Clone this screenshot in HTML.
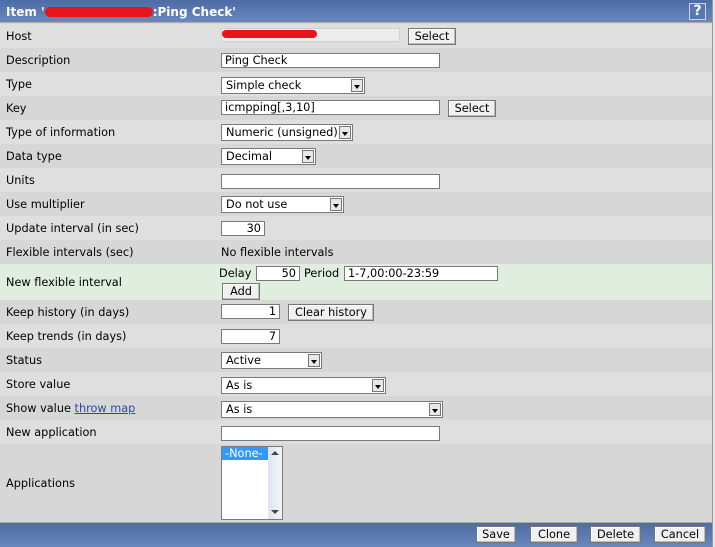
<!DOCTYPE html>
<html><head><meta charset="utf-8"><style>
*{box-sizing:border-box;margin:0;padding:0}
body{width:715px;height:547px;background:#d8d8d8;font-family:"DejaVu Sans","Liberation Sans",sans-serif;font-size:11.3px;color:#000;position:relative;overflow:hidden}
.a{position:absolute}
.row{position:absolute;left:0;width:712px}
.l{background:#dfdfdf}.d{background:#d7d7d7}
.lab{position:absolute;left:6px;font-size:11.3px}
.in{position:absolute;background:#fff;border:1px solid #7a7a7a;height:15px;padding:0 3px;line-height:14px;font-size:11.3px;white-space:nowrap;overflow:hidden}
.r{text-align:right}
.sel{position:absolute;background:#fff;border:1px solid #7a7a7a;height:17px;padding:0 4px;line-height:16px;font-size:11.3px}
.sel:after{content:"";position:absolute;right:1px;top:1px;width:12px;height:13px;background:#e8e8e8;border:1px solid #777;box-sizing:border-box}
.sel:before{content:"";position:absolute;right:4px;top:7px;border:3px solid transparent;border-top:4px solid #000;z-index:2}
.btn{position:absolute;background:#f0f0f0;border:1px solid #777;box-shadow:inset -1px -1px 0 #bbb,inset 1px 1px 0 #fff;height:17px;text-align:center;line-height:16px;font-size:11.3px}
.hdr{position:absolute;left:0;width:712px;background:linear-gradient(#4c6ca6,#6a88bc);color:#fff}
</style></head><body>
<div class="hdr" style="top:0;height:23px;border-bottom:1px solid #aaa"></div>
<div class="a" style="left:6px;top:5px;color:#fff;font-weight:bold;font-size:12px">Item '<span style="display:inline-block;width:108px;height:10px;background:#e8141c;border-radius:5px;vertical-align:-1px"></span>:Ping Check'</div>
<div class="a" style="left:689px;top:3px;width:17px;height:17px;border:1px solid #c8d4e8;color:#fff;font-weight:bold;font-size:14px;line-height:15px;text-align:center;background:#5a78b0">?</div>

<div class="row l" style="top:24px;height:24px"></div>
<div class="row d" style="top:48px;height:24px"></div>
<div class="row l" style="top:72px;height:24px"></div>
<div class="row d" style="top:96px;height:24px"></div>
<div class="row l" style="top:120px;height:24px"></div>
<div class="row d" style="top:144px;height:24px"></div>
<div class="row l" style="top:168px;height:24px"></div>
<div class="row d" style="top:192px;height:24px"></div>
<div class="row l" style="top:216px;height:24px"></div>
<div class="row d" style="top:240px;height:24px"></div>
<div class="row" style="top:264px;height:36px;background:#dfeedf"></div>
<div class="row d" style="top:300px;height:24px"></div>
<div class="row l" style="top:324px;height:24px"></div>
<div class="row d" style="top:348px;height:24px"></div>
<div class="row l" style="top:372px;height:24px"></div>
<div class="row d" style="top:396px;height:24px"></div>
<div class="row l" style="top:420px;height:24px"></div>
<div class="row d" style="top:444px;height:78px"></div>
<div class="a" style="left:712px;top:0;width:3px;height:547px;background:#e4e4e4;border-left:1px solid #9a9a9a"></div>

<div class="lab" style="top:30px">Host</div>
<div class="lab" style="top:54px">Description</div>
<div class="lab" style="top:78px">Type</div>
<div class="lab" style="top:102px">Key</div>
<div class="lab" style="top:126px">Type of information</div>
<div class="lab" style="top:150px">Data type</div>
<div class="lab" style="top:174px">Units</div>
<div class="lab" style="top:198px">Use multiplier</div>
<div class="lab" style="top:222px">Update interval (in sec)</div>
<div class="lab" style="top:246px">Flexible intervals (sec)</div>
<div class="lab" style="top:276px">New flexible interval</div>
<div class="lab" style="top:306px">Keep history (in days)</div>
<div class="lab" style="top:330px">Keep trends (in days)</div>
<div class="lab" style="top:354px">Status</div>
<div class="lab" style="top:378px">Store value</div>
<div class="lab" style="top:402px">Show value <span style="color:#1f4f9f;text-decoration:underline">throw map</span></div>
<div class="lab" style="top:426px">New application</div>
<div class="lab" style="top:477px">Applications</div>

<div class="a" style="left:221px;top:28px;width:179px;height:14px;background:#ececec;border:1px solid #d0d0d0"></div>
<div class="a" style="left:222px;top:30px;width:95px;height:8px;background:#e8141c;border-radius:4px"></div>
<div class="btn" style="left:408px;top:28px;width:48px">Select</div>
<div class="in" style="left:221px;top:53px;width:219px">Ping Check</div>
<div class="sel" style="left:221px;top:77px;width:144px">Simple check</div>
<div class="in" style="left:221px;top:100px;width:219px">icmpping[,3,10]</div>
<div class="btn" style="left:448px;top:100px;width:48px">Select</div>
<div class="sel" style="left:221px;top:124px;width:132px">Numeric (unsigned)</div>
<div class="sel" style="left:221px;top:148px;width:95px">Decimal</div>
<div class="in" style="left:221px;top:174px;width:219px"></div>
<div class="sel" style="left:221px;top:196px;width:123px">Do not use</div>
<div class="in r" style="left:221px;top:221px;width:44px">30</div>
<div class="a" style="left:221px;top:246px">No flexible intervals</div>
<div class="a" style="left:219px;top:267px">Delay</div>
<div class="in r" style="left:256px;top:266px;width:44px">50</div>
<div class="a" style="left:304px;top:267px">Period</div>
<div class="in" style="left:344px;top:266px;width:154px">1-7,00:00-23:59</div>
<div class="btn" style="left:222px;top:283px;width:38px">Add</div>
<div class="in r" style="left:221px;top:304px;width:59px">1</div>
<div class="btn" style="left:288px;top:304px;width:86px">Clear history</div>
<div class="in r" style="left:221px;top:329px;width:59px">7</div>
<div class="sel" style="left:221px;top:352px;width:101px">Active</div>
<div class="sel" style="left:221px;top:377px;width:165px">As is</div>
<div class="sel" style="left:221px;top:401px;width:222px">As is</div>
<div class="in" style="left:221px;top:426px;width:219px"></div>
<div class="a" style="left:221px;top:446px;width:62px;height:74px;background:#fff;border:1px solid #7a7a7a">
 <div class="a" style="left:0;top:0;width:47px;height:13px;background:#3399ff;color:#fff;line-height:13px;padding-left:3px">-None-</div>
 <div class="a" style="right:0;top:0;width:14px;height:72px;background:linear-gradient(90deg,#dde4f0,#f4f6fa)"></div>
 <div class="a" style="right:3px;top:4px;border:4px solid transparent;border-bottom:4px solid #444;border-top:0"></div>
 <div class="a" style="right:3px;top:63px;border:4px solid transparent;border-top:4px solid #444;border-bottom:0"></div>
</div>

<div class="hdr" style="top:522px;height:25px;border-top:1px solid #aaa"></div>
<div class="btn" style="left:476px;top:526px;width:40px">Save</div>
<div class="btn" style="left:530px;top:526px;width:48px">Clone</div>
<div class="btn" style="left:590px;top:526px;width:51px">Delete</div>
<div class="btn" style="left:654px;top:526px;width:52px">Cancel</div>
</body></html>
